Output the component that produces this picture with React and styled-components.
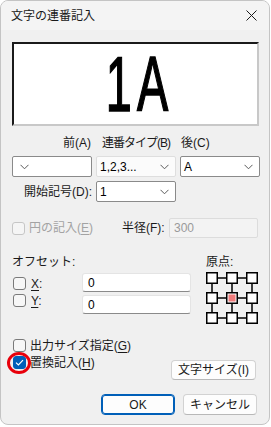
import React from "react";
import styled, { createGlobalStyle } from "styled-components";

const GlobalStyle = createGlobalStyle`
  html, body {
    margin: 0;
    padding: 0;
    background: #ffffff;
  }
  * {
    box-sizing: border-box;
  }
`;

const Window = styled.div`
  width: 270px;
  height: 425px;
  border: 1px solid #c4c4c4;
  border-radius: 8px;
  background: #f0f0f0;
  overflow: hidden;
  display: flex;
  flex-direction: column;
  font-family: "Liberation Sans", "Noto Sans CJK JP", sans-serif;
  font-size: 12px;
  line-height: 16px;
  color: #1a1a1a;
`;

const TitleBar = styled.div`
  height: 29px;
  flex: none;
  display: flex;
  align-items: center;
  justify-content: space-between;
  padding: 0 12px 0 10px;
  background: #f4f4f4;
`;

const Title = styled.span`
  font-size: 12px;
  color: #1a1a1a;
`;

const Content = styled.div`
  padding: 0 10px 0 11px;
  display: flex;
  flex-direction: column;
`;

const Preview = styled.div`
  margin-top: 12px;
  height: 84px;
  background: #ffffff;
  border-top: 2px solid #1a1a1a;
  border-left: 2px solid #1a1a1a;
  border-right: 2px solid #c8c8c8;
  border-bottom: 2px solid #c8c8c8;
  display: flex;
  align-items: center;
  justify-content: center;
`;

const PreviewText = styled.span`
  display: inline-block;
  font-family: "Liberation Sans", Arial, sans-serif;
  font-size: 78px;
  line-height: 80px;
  color: #000;
  -webkit-text-stroke: 1.6px #000;
  letter-spacing: 9px;
  transform: scaleX(0.6);
  margin-left: 8px;
`;

const Grid3 = styled.div`
  display: grid;
  grid-template-columns: repeat(3, 80px);
  column-gap: 4px;
  margin-top: ${(p) => p.$mt || 0}px;
  align-items: center;
`;

const ColLabel = styled.div`
  text-align: ${(p) => p.$align || "left"};
  padding: ${(p) => p.$pad || "0"};
  letter-spacing: ${(p) => (p.$tight ? "-1px" : "0")};
  white-space: nowrap;
`;

const Combo = styled.div`
  height: 21px;
  background: ${(p) => (p.$flat ? "#fbfbfb" : "#ffffff")};
  border: 1px solid ${(p) => (p.$flat ? "#dedede" : "#8a8a8a")};
  border-radius: 2px;
  display: flex;
  align-items: center;
  justify-content: space-between;
  padding: 0 6px 0 3px;
  flex-direction: ${(p) => (p.$leftArrow ? "row-reverse" : "row")};
`;

const ComboText = styled.span`
  color: #000;
`;

const Chevron = ({ left }) => (
  <svg width="9" height="6" viewBox="0 0 9 6" style={{ marginLeft: left ? 4 : 0 }}>
    <polyline points="0.5,0.8 4.5,4.8 8.5,0.8" fill="none" stroke="#5a5a5a" strokeWidth="1" />
  </svg>
);

const RightLabel = styled.div`
  text-align: right;
  white-space: nowrap;
`;

const DisabledRow = styled.div`
  margin-top: 16px;
  height: 20px;
  display: flex;
  align-items: center;
`;

const CheckBox = styled.span`
  position: relative;
  display: inline-flex;
  align-items: center;
  justify-content: center;
  flex: none;
  width: 13px;
  height: 13px;
  border-radius: 3px;
  border: 1px solid ${(p) => (p.$disabled ? "#c6c6c6" : p.$checked ? "#005fb8" : "#7a7a7a")};
  background: ${(p) => (p.$checked ? "#005fb8" : p.$disabled ? "#f5f5f5" : "#f7f7f7")};
`;

const Annotation = styled.span`
  position: absolute;
  left: -7px;
  top: -5px;
  width: 24px;
  height: 22px;
  border: 3px solid #e8000b;
  border-radius: 50%;
`;

const CheckLabel = styled.span`
  margin-left: ${(p) => p.$gap || 4}px;
  color: ${(p) => (p.$disabled ? "#a3a3a3" : "#1a1a1a")};
  white-space: nowrap;
`;

const U = styled.span`
  text-decoration: underline;
  text-underline-offset: 2px;
`;

const RadiusLabel = styled.span`
  margin-left: 29px;
  white-space: nowrap;
`;

const DisabledInput = styled.div`
  margin-left: auto;
  margin-right: 1px;
  width: 89px;
  height: 20px;
  border: 1px solid #dcdcdc;
  border-radius: 2px;
  background: #f3f3f3;
  color: #9a9a9a;
  padding: 1px 4px;
`;

const OffsetArea = styled.div`
  margin-top: 16px;
  display: flex;
  align-items: flex-start;
`;

const OffsetLeft = styled.div`
  flex: 1;
  display: flex;
  flex-direction: column;
`;

const SectionLabel = styled.div`
  height: 16px;
  white-space: nowrap;
`;

const AxisArea = styled.div`
  margin-top: 3px;
  display: flex;
`;

const AxisChecks = styled.div`
  width: 70px;
  display: flex;
  flex-direction: column;
  gap: 4px;
  padding-top: 4px;
  padding-left: 1px;
`;

const AxisCheck = styled.label`
  display: flex;
  align-items: center;
  height: 13px;
`;

const AxisInputs = styled.div`
  display: flex;
  flex-direction: column;
  gap: 3px;
`;

const TextInput = styled.div`
  width: 109px;
  height: 19px;
  background: #ffffff;
  border: 1px solid #e4e4e4;
  border-bottom: 1px solid #8a8a8a;
  border-radius: 3px;
  padding: 1px 5px;
  color: #000;
`;

const OriginCol = styled.div`
  width: 53px;
  display: flex;
  flex-direction: column;
`;

const OriginGrid = styled.svg`
  margin-top: 2px;
  display: block;
`;

const BottomRow = styled.div`
  margin-top: 12px;
  display: flex;
  align-items: flex-start;
  justify-content: space-between;
`;

const CheckColumn = styled.div`
  display: flex;
  flex-direction: column;
  gap: 4px;
  padding-top: 2px;
  padding-left: 1px;
`;

const CheckRow = styled.label`
  display: flex;
  align-items: center;
  height: 13px;
`;

const Button = styled.div`
  width: ${(p) => p.$w || 74}px;
  height: ${(p) => p.$h || 21}px;
  display: flex;
  align-items: center;
  justify-content: center;
  background: #fdfdfd;
  border: 1px solid ${(p) => (p.$primary ? "#005fb8" : "#d2d2d2")};
  border-bottom-color: ${(p) => (p.$primary ? "#005fb8" : "#b8b8b8")};
  box-shadow: ${(p) => (p.$primary ? "inset 0 0 0 1px #005fb8" : "none")};
  border-radius: 4px;
  color: #1a1a1a;
  white-space: nowrap;
`;

const SizeButton = styled(Button)`
  margin-top: 23px;
  margin-right: 3px;
`;

const ButtonRow = styled.div`
  margin-top: 14px;
  display: flex;
  justify-content: flex-end;
  gap: 8px;
  padding-right: 2px;
`;

const CheckMark = () => (
  <svg width="9" height="7" viewBox="0 0 9 7">
    <polyline points="1,3.6 3.4,6 8,1.2" fill="none" stroke="#ffffff" strokeWidth="1.2" />
  </svg>
);

const CloseIcon = () => (
  <svg width="11" height="11" viewBox="0 0 11 11">
    <path d="M0.5 0.5 L10.5 10.5 M10.5 0.5 L0.5 10.5" stroke="#1a1a1a" strokeWidth="1" />
  </svg>
);

const Origin = () => {
  const pos = [0, 20, 40];
  return (
    <OriginGrid width="53" height="53" viewBox="0 0 53 53">
      {pos.map((y) => (
        <line key={"h" + y} x1="6" y1={y + 6} x2="46" y2={y + 6} stroke="#000" strokeWidth="1.5" />
      ))}
      {pos.map((x) => (
        <line key={"v" + x} x1={x + 6} y1="6" x2={x + 6} y2="46" stroke="#000" strokeWidth="1.5" />
      ))}
      {pos.map((y) =>
        pos.map((x) => (
          <rect
            key={x + "-" + y}
            x={x + 0.75}
            y={y + 0.75}
            width="10.5"
            height="10.5"
            fill="#fff"
            stroke="#000"
            strokeWidth="1.5"
          />
        ))
      )}
      <rect x="22.5" y="22.5" width="7" height="7" fill="#f07b7b" />
    </OriginGrid>
  );
};

export default function App() {
  return (
    <>
      <GlobalStyle />
      <Window>
        <TitleBar>
          <Title>文字の連番記入</Title>
          <CloseIcon />
        </TitleBar>
        <Content>
          <Preview>
            <PreviewText>1A</PreviewText>
          </Preview>

          <Grid3 $mt={9}>
            <ColLabel $align="right" $pad="0 1px 0 0">前(A)</ColLabel>
            <ColLabel $align="center" $tight>連番タイプ(B)</ColLabel>
            <ColLabel $align="left" $pad="0 0 0 1px">後(C)</ColLabel>
          </Grid3>

          <Grid3 $mt={5}>
            <Combo $leftArrow>
              <span />
              <Chevron left />
            </Combo>
            <Combo $flat>
              <ComboText>1,2,3...</ComboText>
              <Chevron />
            </Combo>
            <Combo>
              <ComboText>A</ComboText>
              <Chevron />
            </Combo>
          </Grid3>

          <Grid3 $mt={4}>
            <RightLabel>開始記号(D):</RightLabel>
            <Combo>
              <ComboText>1</ComboText>
              <Chevron />
            </Combo>
          </Grid3>

          <DisabledRow>
            <CheckBox $disabled />
            <CheckLabel $disabled>
              円の記入(<U>E</U>)
            </CheckLabel>
            <RadiusLabel>半径(F):</RadiusLabel>
            <DisabledInput>300</DisabledInput>
          </DisabledRow>

          <OffsetArea>
            <OffsetLeft>
              <SectionLabel>オフセット:</SectionLabel>
              <AxisArea>
                <AxisChecks>
                  <AxisCheck>
                    <CheckBox />
                    <CheckLabel $gap={5}>
                      <U>X</U>:
                    </CheckLabel>
                  </AxisCheck>
                  <AxisCheck>
                    <CheckBox />
                    <CheckLabel $gap={5}>
                      <U>Y</U>:
                    </CheckLabel>
                  </AxisCheck>
                </AxisChecks>
                <AxisInputs>
                  <TextInput>0</TextInput>
                  <TextInput>0</TextInput>
                </AxisInputs>
              </AxisArea>
            </OffsetLeft>
            <OriginCol>
              <SectionLabel>原点:</SectionLabel>
              <Origin />
            </OriginCol>
          </OffsetArea>

          <BottomRow>
            <CheckColumn>
              <CheckRow>
                <CheckBox />
                <CheckLabel>
                  出力サイズ指定(<U>G</U>)
                </CheckLabel>
              </CheckRow>
              <CheckRow>
                <CheckBox $checked>
                  <CheckMark />
                  <Annotation />
                </CheckBox>
                <CheckLabel>
                  置換記入(<U>H</U>)
                </CheckLabel>
              </CheckRow>
            </CheckColumn>
            <SizeButton $w={85} $h={20}>
              文字サイズ(I)
            </SizeButton>
          </BottomRow>

          <ButtonRow>
            <Button $primary>OK</Button>
            <Button>キャンセル</Button>
          </ButtonRow>
        </Content>
      </Window>
    </>
  );
}
